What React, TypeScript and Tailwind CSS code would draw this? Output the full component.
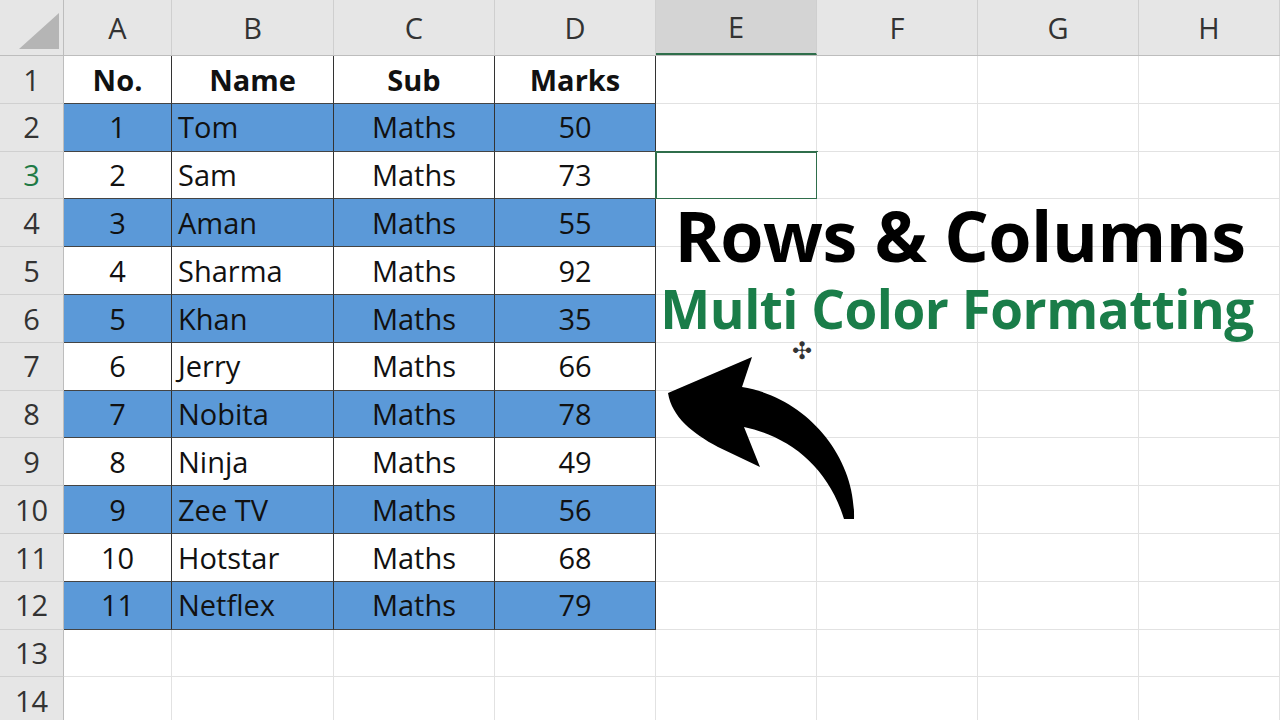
const cols = [
  { l: 'A', w: 108 },
  { l: 'B', w: 162 },
  { l: 'C', w: 161 },
  { l: 'D', w: 161 },
  { l: 'E', w: 161 },
  { l: 'F', w: 161 },
  { l: 'G', w: 161 },
  { l: 'H', w: 141 },
];

const data = [
  ['1', 'Tom', '50'],
  ['2', 'Sam', '73'],
  ['3', 'Aman', '55'],
  ['4', 'Sharma', '92'],
  ['5', 'Khan', '35'],
  ['6', 'Jerry', '66'],
  ['7', 'Nobita', '78'],
  ['8', 'Ninja', '49'],
  ['9', 'Zee TV', '56'],
  ['10', 'Hotstar', '68'],
  ['11', 'Netflex', '79'],
];

function Row({ n, cells, blue, bold, active }: { n: number; cells: string[]; blue?: boolean; bold?: boolean; active?: boolean }) {
  const bg = blue ? 'bg-[#5b99d8]' : 'bg-white';
  const tc = bold ? 'font-bold' : '';
  const tableBorder = 'border-r border-[#333] border-b border-b-[#444]';
  return (
    <div className="flex h-[47.8px]">
      <div className={`w-[64px] shrink-0 flex items-center justify-center bg-[#e6e6e6] border-r border-[#bdbdbd] border-b border-b-[#d0d0d0] ${active ? 'text-[#1f7a45] bg-[#d6d6d6]' : 'text-[#333]'}`}>
        {n}
      </div>
      {cols.map((c, i) => {
        const inTable = i < 4 && cells.length > 0;
        const txt = inTable ? cells[i] : '';
        const align = i === 1 && !bold ? 'justify-start pl-[6px]' : 'justify-center';
        return (
          <div
            key={c.l}
            style={{ width: c.w }}
            className={`shrink-0 flex items-center ${align} ${tc} ${inTable ? `${bg} ${tableBorder}` : 'bg-white border-r border-[#e2e2e2] border-b border-b-[#e2e2e2]'} ${active && i === 4 ? 'outline-2 outline-[#2f6e4b] -outline-offset-1' : ''}`}
          >
            {txt}
          </div>
        );
      })}
    </div>
  );
}

export default function App() {
  return (
    <div className="relative w-[1280px] h-[720px] overflow-hidden bg-white text-[29px] text-[#111]" style={{ fontFamily: '"Open Sans", "Noto Sans", sans-serif' }}>
      <div className="flex h-[56px] bg-[#e6e6e6] border-b border-[#bdbdbd]">
        <div className="w-[64px] shrink-0 relative border-r border-[#bdbdbd]">
          <div className="absolute right-[4px] bottom-[6px] w-0 h-0 border-l-[40px] border-l-transparent border-b-[36px] border-b-[#b5b5b5]" />
        </div>
        {cols.map((c) => (
          <div key={c.l} style={{ width: c.w }} className={`shrink-0 flex items-center justify-center border-r border-[#cfcfcf] text-[#333] ${c.l === 'E' ? 'bg-[#d4d4d4] border-b-2 border-b-[#2f6e4b]' : ''}`}>
            {c.l}
          </div>
        ))}
      </div>
      <Row n={1} cells={['No.', 'Name', 'Sub', 'Marks']} bold />
      {data.map((d, i) => (
        <Row key={i} n={i + 2} cells={[d[0], d[1], 'Maths', d[2]]} blue={i % 2 === 0} active={i === 1} />
      ))}
      <Row n={13} cells={[]} />
      <Row n={14} cells={[]} />

      <div className="absolute left-[640px] top-[200px] w-[640px] text-center font-bold text-[70px] leading-none text-black tracking-[-0.5px]">
        Rows &amp; Columns
      </div>
      <div className="absolute left-[640px] top-[282px] w-[634px] text-center font-bold text-[53px] leading-none text-[#1a7d49] tracking-[-0.5px]">
        Multi Color Formatting
      </div>
      <div className="absolute left-[792px] top-[338px] text-[24px] leading-none text-[#333]">✣</div>
      <svg className="absolute left-[660px] top-[355px]" width="210" height="170" viewBox="0 0 210 170">
        <path
          d="M8 38 L92 2 L82 32 C145 42 196 100 194 164 L184 164 C168 112 130 82 84 72 L100 112 L58 92 C32 78 12 62 8 38 Z"
          fill="#000"
        />
      </svg>
    </div>
  );
}
